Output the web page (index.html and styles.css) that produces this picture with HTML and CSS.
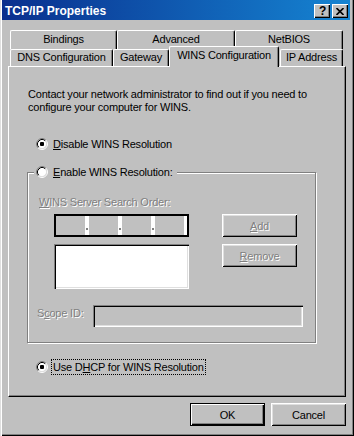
FILE: index.html
```html
<!DOCTYPE html>
<html lang="en">
<head>
    <meta charset="UTF-8">
    <title>TCP/IP Properties</title>
    <link rel="stylesheet" href="styles.css">
</head>
<body>
    <svg class="defs" width="0" height="0">
        <symbol id="radio" viewBox="0 0 12 12">
            <circle cx="6" cy="6" r="4.5" fill="#fff"/>
            <path d="M2.11 9.89 A5.5 5.5 0 0 1 9.89 2.11" fill="none" stroke="#808080"/>
            <path d="M9.89 2.11 A5.5 5.5 0 0 1 2.11 9.89" fill="none" stroke="#fff"/>
            <path d="M2.82 9.18 A4.5 4.5 0 0 1 9.18 2.82" fill="none" stroke="#000"/>
            <path d="M9.18 2.82 A4.5 4.5 0 0 1 2.82 9.18" fill="none" stroke="#dfdfdf"/>
        </symbol>
    </svg>

    <div class="window">
        <div class="titlebar">
            <span class="title">TCP/IP Properties</span>
            <div class="title-buttons">
                <span class="title-btn help">?</span>
                <span class="title-btn">
                    <svg width="8" height="7" viewBox="0 0 8 7"><path d="M0.5 0 L7.5 7 M7.5 0 L0.5 7" stroke="#000" stroke-width="1.6"/></svg>
                </span>
            </div>
        </div>

        <div class="content">
            <div class="tabs">
                <div class="tab-row">
                    <div class="tab tab-bindings">Bindings</div>
                    <div class="tab tab-advanced">Advanced</div>
                    <div class="tab tab-netbios">NetBIOS</div>
                </div>
                <div class="tab-row front">
                    <div class="tab tab-dns">DNS Configuration</div>
                    <div class="tab tab-gateway">Gateway</div>
                    <div class="tab tab-wins selected">WINS Configuration</div>
                    <div class="tab tab-ip">IP Address</div>
                </div>
            </div>

            <div class="panel">
                <p class="intro">Contact your network administrator to find out if you need to<br>configure your computer for WINS.</p>

                <div class="option option-disable">
                    <svg class="radio" width="12" height="12"><use href="#radio"/></svg>
                    <span class="dot"></span>
                    <label><u>D</u>isable WINS Resolution</label>
                </div>

                <div class="group">
                    <div class="legend">
                        <svg class="radio" width="12" height="12"><use href="#radio"/></svg>
                        <label><u>E</u>nable WINS Resolution:</label>
                    </div>

                    <div class="field-label disabled"><u>W</u>INS Server Search Order:</div>

                    <div class="server-row first">
                        <div class="ip-field">
                            <span class="octet"></span><span class="sep"><i></i></span>
                            <span class="octet"></span><span class="sep"><i></i></span>
                            <span class="octet"></span><span class="sep"><i></i></span>
                            <span class="octet"></span><span class="sep end"></span>
                        </div>
                        <div class="btn disabled"><u>A</u>dd</div>
                    </div>

                    <div class="server-row">
                        <div class="listbox"></div>
                        <div class="btn disabled"><u>R</u>emove</div>
                    </div>

                    <div class="scope-row">
                        <span class="scope-label disabled">S<u>c</u>ope ID:</span>
                        <div class="scope-field"></div>
                    </div>
                </div>

                <div class="option option-dhcp">
                    <svg class="radio" width="12" height="12"><use href="#radio"/></svg>
                    <span class="dot"></span>
                    <label class="focused">Use D<u>H</u>CP for WINS Resolution</label>
                </div>
            </div>

            <div class="dialog-buttons">
                <div class="btn default">OK</div>
                <div class="btn">Cancel</div>
            </div>
        </div>
    </div>
</body>
</html>
```

FILE: styles.css
```css
body {
    margin: 0;
    font-family: "Liberation Sans", Arial, sans-serif;
    font-size: 11px;
    letter-spacing: -0.2px;
    color: #000;
    background-color: #c0c0c0;
}

.defs {
    position: absolute;
}

.window {
    width: 354px;
    height: 436px;
    box-sizing: border-box;
    padding: 0 4px 2px 2px;
    background-color: #c0c0c0;
    box-shadow: inset 1px 0 0 #dfdfdf, inset 2px 0 0 #fff, inset -1px -1px 0 #000, inset -2px -2px 0 #808080;
}

/* title bar */
.titlebar {
    display: flex;
    justify-content: space-between;
    align-items: flex-start;
    height: 20px;
    padding: 0 2px 0 3px;
    background: linear-gradient(to right, #0a2f8e, #1584d2);
}

.title {
    padding-top: 1px;
    line-height: 20px;
    font-size: 12px;
    font-weight: bold;
    letter-spacing: 0;
    color: #fff;
}

.title-buttons {
    display: flex;
    gap: 2px;
    margin-top: 4px;
}

.title-btn {
    display: flex;
    align-items: center;
    justify-content: center;
    width: 16px;
    height: 14px;
    box-sizing: border-box;
    background-color: #c0c0c0;
    box-shadow: inset 1px 1px 0 #fff, inset -1px -1px 0 #000, inset -2px -2px 0 #808080;
}

.title-btn.help {
    font-size: 12px;
    font-weight: bold;
    line-height: 14px;
    padding-left: 1px;
}

/* tabs */
.content {
    padding: 10px 0 0 6px;
}

.tabs {
    padding-left: 2px;
}

.tab-row {
    display: flex;
    height: 19px;
}

.tab-row.front {
    height: 17px;
}

.tab {
    box-sizing: border-box;
    height: 19px;
    padding-top: 2px;
    text-align: center;
    line-height: 13px;
    background-color: #c0c0c0;
    border-top: 1px solid #fff;
    border-left: 1px solid #fff;
    border-right: 1px solid #000;
    border-radius: 2px 2px 0 0;
    box-shadow: inset -1px 0 0 #808080;
}

.front .tab {
    height: 17px;
    padding-top: 1px;
}

.tab-bindings { width: 107px; }
.tab-advanced { width: 118px; }
.tab-netbios { width: 108px; }
.tab-dns { width: 103px; }
.tab-gateway { width: 56px; }
.tab-ip { width: 63px; margin-left: 1px; }

.front .tab.selected {
    position: relative;
    z-index: 1;
    width: 110px;
    height: 21px;
    margin-top: -3px;
    padding-top: 2px;
}

/* property page */
.panel {
    box-sizing: border-box;
    width: 338px;
    height: 331px;
    border-top: 1px solid #fff;
    border-left: 1px solid #fff;
    border-right: 1px solid #000;
    border-bottom: 1px solid #000;
    box-shadow: inset -1px -1px 0 #808080;
}

.intro {
    margin: 21px 0 0 19px;
    line-height: 13px;
}

.option {
    display: flex;
    align-items: center;
    position: relative;
    height: 16px;
    margin-left: 27px;
}

.option-disable {
    margin-top: 22px;
}

.option-dhcp {
    margin-top: 16px;
}

.radio {
    display: block;
    flex: none;
}

.dot {
    position: absolute;
    left: 4px;
    top: 6px;
    width: 4px;
    height: 4px;
    background-color: #000;
    border-radius: 1px;
}

label {
    margin-left: 3px;
    padding: 0 1px;
    line-height: 14px;
    border: 1px dotted transparent;
}

label.focused {
    border-color: #000;
}

/* group box */
.group {
    width: 287px;
    margin: 20px 0 0 18px;
    padding-bottom: 15px;
    border: 1px solid #808080;
    box-shadow: inset 1px 1px 0 #fff, 1px 1px 0 #fff;
}

.legend {
    display: flex;
    align-items: center;
    width: fit-content;
    height: 16px;
    margin: -9px 0 0 6px;
    padding: 0 2px;
    background-color: #c0c0c0;
}

.disabled {
    color: #808080;
    text-shadow: 1px 1px 0 #fff;
}

.field-label {
    margin: 16px 0 0 11px;
    line-height: 13px;
}

.server-row {
    display: flex;
    gap: 33px;
    margin: 7px 0 0 26px;
}

.server-row.first {
    margin-top: 5px;
}

.ip-field {
    display: flex;
    box-sizing: border-box;
    width: 135px;
    height: 23px;
    border: 2px solid #000;
    background-color: #fff;
}

.octet {
    width: 29px;
    background-color: #c0c0c0;
}

.sep {
    display: flex;
    align-items: flex-end;
    justify-content: center;
    width: 4px;
    padding-bottom: 5px;
    box-sizing: border-box;
}

.sep.end {
    width: 3px;
}

.sep i {
    width: 2px;
    height: 2px;
    background-color: #808080;
}

.listbox {
    box-sizing: border-box;
    width: 135px;
    height: 45px;
    background-color: #fff;
    box-shadow: inset 1px 1px 0 #808080, inset 2px 2px 0 #000, inset -1px -1px 0 #fff, inset -2px -2px 0 #dfdfdf;
}

.btn {
    display: flex;
    align-items: center;
    justify-content: center;
    box-sizing: border-box;
    width: 75px;
    height: 23px;
    background-color: #c0c0c0;
    box-shadow: inset 1px 1px 0 #fff, inset -1px -1px 0 #000, inset 2px 2px 0 #dfdfdf, inset -2px -2px 0 #808080;
}

.scope-row {
    display: flex;
    align-items: flex-start;
    margin: 16px 0 0 9px;
}

.scope-label {
    width: 56px;
    margin-top: 2px;
    line-height: 13px;
}

.scope-field {
    box-sizing: border-box;
    width: 210px;
    height: 22px;
    background-color: #c0c0c0;
    box-shadow: inset 1px 1px 0 #808080, inset 2px 2px 0 #000, inset -1px -1px 0 #fff, inset -2px -2px 0 #dfdfdf;
}

/* OK / Cancel */
.dialog-buttons {
    display: flex;
    justify-content: flex-end;
    gap: 6px;
    width: 338px;
    margin-top: 6px;
}

.btn.default {
    border: 1px solid #000;
    box-shadow: inset 1px 1px 0 #fff, inset -1px -1px 0 #000, inset -2px -2px 0 #808080;
}
```
